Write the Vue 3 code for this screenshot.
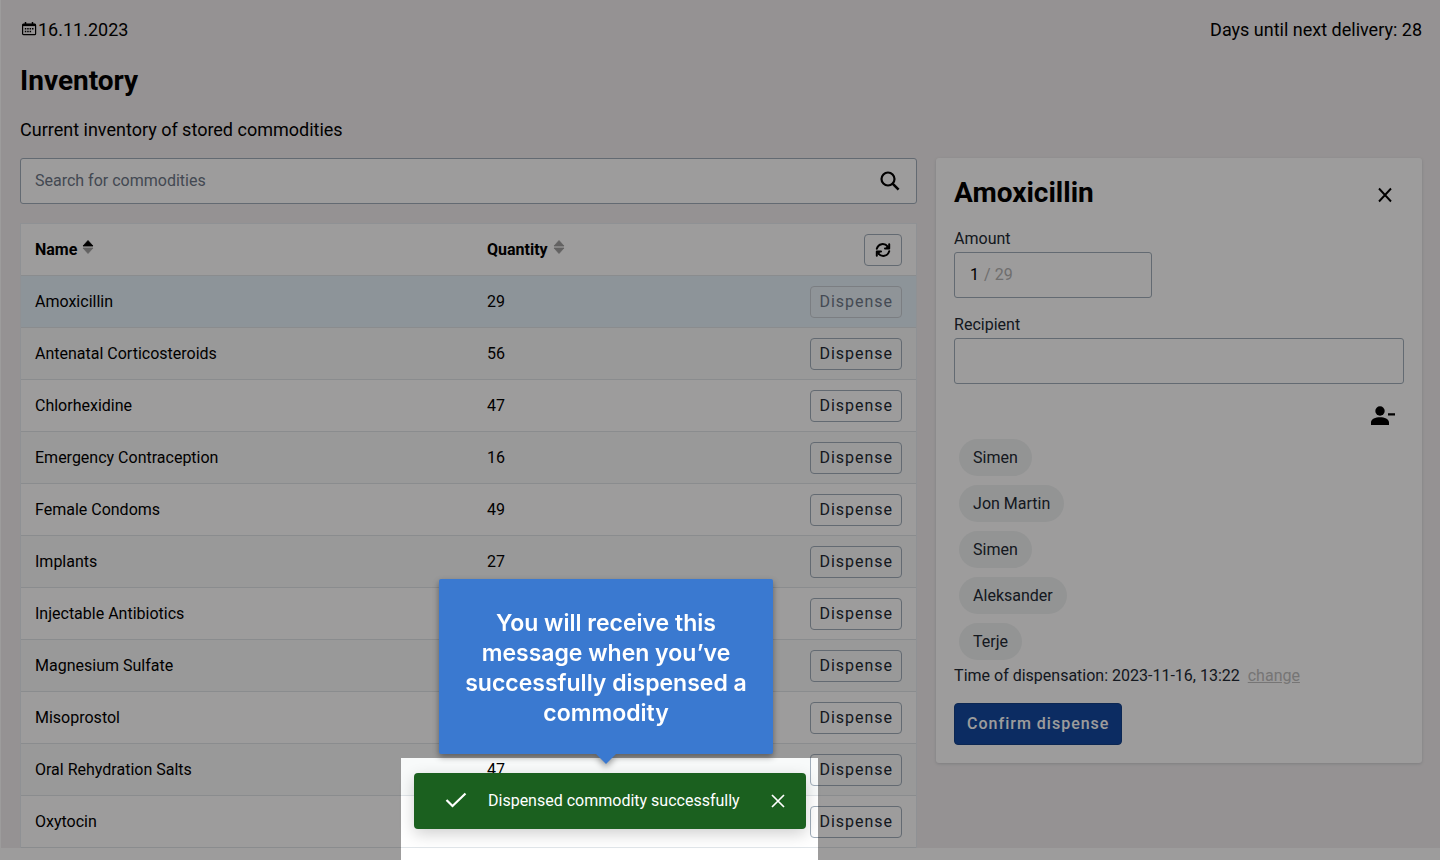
<script setup>
import { ref } from 'vue'

const commodities = [
  { name: 'Amoxicillin', quantity: 29 },
  { name: 'Antenatal Corticosteroids', quantity: 56 },
  { name: 'Chlorhexidine', quantity: 47 },
  { name: 'Emergency Contraception', quantity: 16 },
  { name: 'Female Condoms', quantity: 49 },
  { name: 'Implants', quantity: 27 },
  { name: 'Injectable Antibiotics' },
  { name: 'Magnesium Sulfate' },
  { name: 'Misoprostol' },
  { name: 'Oral Rehydration Salts', quantity: 47 },
  { name: 'Oxytocin' },
]
const recipients = ['Simen', 'Jon Martin', 'Simen', 'Aleksander', 'Terje']
const selected = ref('Amoxicillin')
const search = ref('')
const amount = ref('1')
const recipient = ref('')
</script>

<template>
  <div class="app">
    <main class="page">
      <div class="topbar">
        <span class="date">
          <svg width="16" height="16" viewBox="0 0 16 16" fill="none" stroke="currentColor">
            <rect x="1.600" y="3.200" width="13" height="10.500" rx="1" stroke-width="1.200" />
            <path d="M1.500 4h13" stroke-width="2.200" />
            <path d="M4.500 1v3M11.500 1v3" stroke-width="1.500" />
            <path d="M3.800 7.700h1.500M6.200 7.700h1.500M8.600 7.700h1.500M11 7.700h1.500M3.800 10.600h1.500M6.200 10.600h1.500M8.600 10.600h1.500" stroke-width="1.500" />
          </svg>16.11.2023</span>
        <span>Days until next delivery: 28</span>
      </div>
      <h1>Inventory</h1>
      <p class="lead">Current inventory of stored commodities</p>

      <div class="columns">
        <section>
          <div class="search">
            <input v-model="search" type="text" placeholder="Search for commodities" aria-label="Search for commodities" />
            <svg width="20" height="20" viewBox="0 0 20 20" fill="none" stroke="currentColor" stroke-width="2.200">
              <circle cx="8" cy="8" r="6.500" />
              <path d="M12.600 12.600l6 6" stroke-width="2.600" />
            </svg>
          </div>

          <table>
            <thead>
              <tr>
                <th class="col-name">Name
                  <svg class="sort" width="12" height="16" viewBox="0 0 12 16"><path d="M6 1.500l5 5.500H1z" fill="#000" stroke="#000" stroke-width=".8" stroke-linejoin="round" /><path d="M6 14.500l5-5.500H1z" fill="#a0a0a0" stroke="#a0a0a0" stroke-width=".8" stroke-linejoin="round" /></svg>
                </th>
                <th>Quantity
                  <svg class="sort" width="12" height="16" viewBox="0 0 12 16"><path d="M6 1.500l5 5.500H1zM6 14.500l5-5.500H1z" fill="#a0a0a0" stroke="#a0a0a0" stroke-width=".8" stroke-linejoin="round" /></svg>
                </th>
                <th>
                  <button class="btn refresh" aria-label="Refresh">
                    <svg width="16" height="16" viewBox="0 0 16 16" fill="none" stroke="currentColor" stroke-width="2" stroke-linecap="round" stroke-linejoin="round">
                      <path d="M1.800 6.800C3.300 1.500 9.500.5 12.800 4.700" />
                      <path d="M14.200 2.300v4.200H10" />
                      <path d="M12.600 4.500l1.500 1.800-2.500.1z" stroke-width="1" fill="currentColor" />
                      <path d="M14.200 9.200C12.700 14.500 6.500 15.500 3.200 11.300" />
                      <path d="M1.800 13.700V9.500H6" />
                      <path d="M3.400 11.500L1.900 9.700l2.500-.1z" stroke-width="1" fill="currentColor" />
                    </svg>
                  </button>
                </th>
              </tr>
            </thead>
            <tbody>
              <tr v-for="item in commodities" :key="item.name" :class="{ selected: item.name === selected }">
                <td>{{ item.name }}</td>
                <td>{{ item.quantity }}</td>
                <td>
                  <button class="btn" :disabled="item.name === selected" @click="selected = item.name">Dispense</button>
                </td>
              </tr>
            </tbody>
          </table>
        </section>

        <aside class="card">
          <div class="card-head">
            <h2>{{ selected }}</h2>
            <button class="icon-btn" aria-label="Close">
              <svg width="14" height="16" viewBox="0 0 14 16" fill="none" stroke="currentColor" stroke-width="1.900"><path d="M1 1.500l12 13M13 1.500l-12 13" /></svg>
            </button>
          </div>
          <label for="amount">Amount</label>
          <div class="field amount">
            <input id="amount" v-model="amount" type="text" />
            <span>/ 29</span>
          </div>
          <label for="recipient">Recipient</label>
          <div class="field">
            <input id="recipient" v-model="recipient" type="text" />
          </div>
          <div class="people">
            <button class="icon-btn" aria-label="Hide recipients">
              <svg width="26" height="20" viewBox="0 0 26 20" fill="currentColor"><circle cx="10" cy="5" r="4.700" /><path d="M1 19v-2.500c0-7 18-7 18 0V19zM18 7.300h7v2.300h-7z" /></svg>
            </button>
          </div>
          <ul class="chips">
            <li v-for="(person, i) in recipients" :key="i"><button @click="recipient = person">{{ person }}</button></li>
          </ul>
          <p class="time">Time of dispensation: 2023-11-16, 13:22 <a href="#">change</a></p>
          <button class="confirm">Confirm dispense</button>
        </aside>
      </div>
    </main>

    <div class="spotlight">
      <div class="tip">You will receive this message when you’ve successfully dispensed a commodity</div>
      <div class="toast" role="status">
        <svg width="22" height="18" viewBox="0 0 22 18" fill="none" stroke="currentColor" stroke-width="2.200"><path d="M1.500 8l6 6L20.500 1.500" /></svg>
        <span>Dispensed commodity successfully</span>
        <button class="icon-btn" aria-label="Dismiss">
          <svg width="14" height="14" viewBox="0 0 14 14" fill="none" stroke="currentColor" stroke-width="1.700"><path d="M1 1l12 12M13 1L1 13" /></svg>
        </button>
      </div>
    </div>
  </div>
</template>

<style>
body {
  margin: 0;
  background: #fff;
}
</style>

<style scoped>
.app {
  position: relative;
  min-height: 100vh;
  overflow: hidden;
  font: 16px/20px Roboto, sans-serif;
  color: #000;
}
.app * {
  box-sizing: border-box;
}
.page {
  padding: 18px 18px 0 19px;
  border-left: 1px solid #fff;
  background: #f2eff0;
}
button,
input {
  font: inherit;
  color: inherit;
}
button {
  cursor: pointer;
}
svg {
  display: block;
  flex: none;
}
.topbar {
  display: flex;
  justify-content: space-between;
  font-size: 18px;
  line-height: 24px;
}
.date {
  display: flex;
  gap: 1px;
  padding-left: 1px;
}
.date svg {
  margin-top: 3px;
}
h1,
h2 {
  margin: 0;
  font-size: 28px;
  line-height: 32px;
  font-weight: 700;
}
h1 {
  margin-top: 23px;
}
.lead {
  margin: 21px 0 16px;
  font-size: 18px;
  line-height: 24px;
}
.columns {
  display: grid;
  grid-template-columns: 24fr 13fr;
  gap: 19px;
  align-items: start;
}
.search,
.field {
  display: flex;
  align-items: center;
  height: 46px;
  padding: 0 14px;
  border: 1px solid #a0adba;
  border-radius: 3px;
  background: #fff;
}
.search {
  margin-bottom: 19px;
  padding-right: 16px;
}
.search input,
.field input {
  flex: 1;
  min-width: 0;
  padding: 0;
  border: 0;
  outline: 0;
  background: transparent;
}
.search input::placeholder {
  color: #6c7787;
  opacity: 1;
}
table {
  width: 100%;
  table-layout: fixed;
  border-collapse: separate;
  border-spacing: 0;
  border: 1px solid #e8edf2;
  border-bottom: 0;
  background: #fff;
}
th,
td {
  height: 52px;
  padding: 0 14px;
  border-bottom: 1px solid #e0e5e9;
  text-align: left;
}
.col-name {
  width: 50.5%;
}
.sort {
  display: inline-block;
  margin-left: 1px;
}
tbody tr:nth-child(even) {
  background: #f8fafa;
}
tbody tr.selected {
  background: #e5f2fb;
}
.btn {
  display: block;
  height: 32px;
  margin-left: auto;
  padding: 0 8px;
  border: 1px solid #a0adba;
  border-radius: 4px;
  background: transparent;
  color: #212934;
  letter-spacing: 1px;
}
.btn:disabled {
  border-color: #c8cfd5;
  background: #f1f3f566;
  color: #6e7a8a;
}
.refresh {
  padding: 0 10px;
  color: #000;
}
.card {
  padding: 19px 18px 18px;
  border-radius: 3px;
  background: #fff;
  box-shadow: 0 1px 3px #404b5a33;
  color: #212934;
}
.card-head {
  display: flex;
  justify-content: space-between;
  align-items: center;
  margin-bottom: 20px;
  padding-right: 12px;
  color: #000;
}
.icon-btn {
  padding: 0;
  border: 0;
  background: none;
}
.card-head .icon-btn {
  padding-top: 4px;
}
label {
  display: block;
  margin-bottom: 3px;
}
.amount {
  width: 198px;
  gap: 4px;
  margin-bottom: 17px;
  padding-left: 15px;
  color: #000;
}
.amount input {
  flex: none;
  width: 10px;
}
.amount span {
  color: #b4b4b4;
}
.people {
  display: flex;
  justify-content: flex-end;
  margin: 22px 8px 13px 0;
  color: #000;
}
.chips {
  display: flex;
  flex-direction: column;
  align-items: flex-start;
  gap: 9px;
  margin: 0;
  padding: 0 0 0 5px;
  list-style: none;
}
.chips button {
  display: block;
  height: 37px;
  padding: 0 14px;
  border: 0;
  border-radius: 19px;
  background: #eff2f2;
}
.time {
  margin: 6px 0 17px;
}
.time a {
  margin-left: 4px;
  color: #c0c0c0;
}
.confirm {
  height: 42px;
  padding: 0 12px;
  border: 1px solid #134088;
  border-radius: 4px;
  background: #1249a0;
  color: #fff;
  font-weight: 500;
  letter-spacing: 1px;
}
.spotlight {
  position: absolute;
  left: 401px;
  bottom: 0;
  width: 417px;
  height: 102px;
  padding: 15px 12px 0 13px;
  box-shadow: 0 0 0 2000px #03000163;
}
.toast {
  display: flex;
  align-items: center;
  height: 56px;
  padding: 0 21px 0 31px;
  border-radius: 4px;
  background: #1b601f;
  box-shadow: 0 5px 16px #00000030;
  color: #fff;
}
.toast span {
  flex: 1;
  padding-left: 21px;
  white-space: nowrap;
}
.tip {
  position: absolute;
  left: 38px;
  bottom: 106px;
  width: 334px;
  padding: 29px 24px 26px;
  border-radius: 2px;
  background: #3a79d0;
  color: #fff;
  font: 600 23px/30px Inter, sans-serif;
  text-align: center;
  filter: drop-shadow(0 3px 3px #00000066);
}
.tip::after {
  content: '';
  position: absolute;
  top: 100%;
  left: 50%;
  margin-left: -10px;
  border: 10px solid transparent;
  border-top-color: #3a79d0;
  border-bottom: 0;
}
</style>
